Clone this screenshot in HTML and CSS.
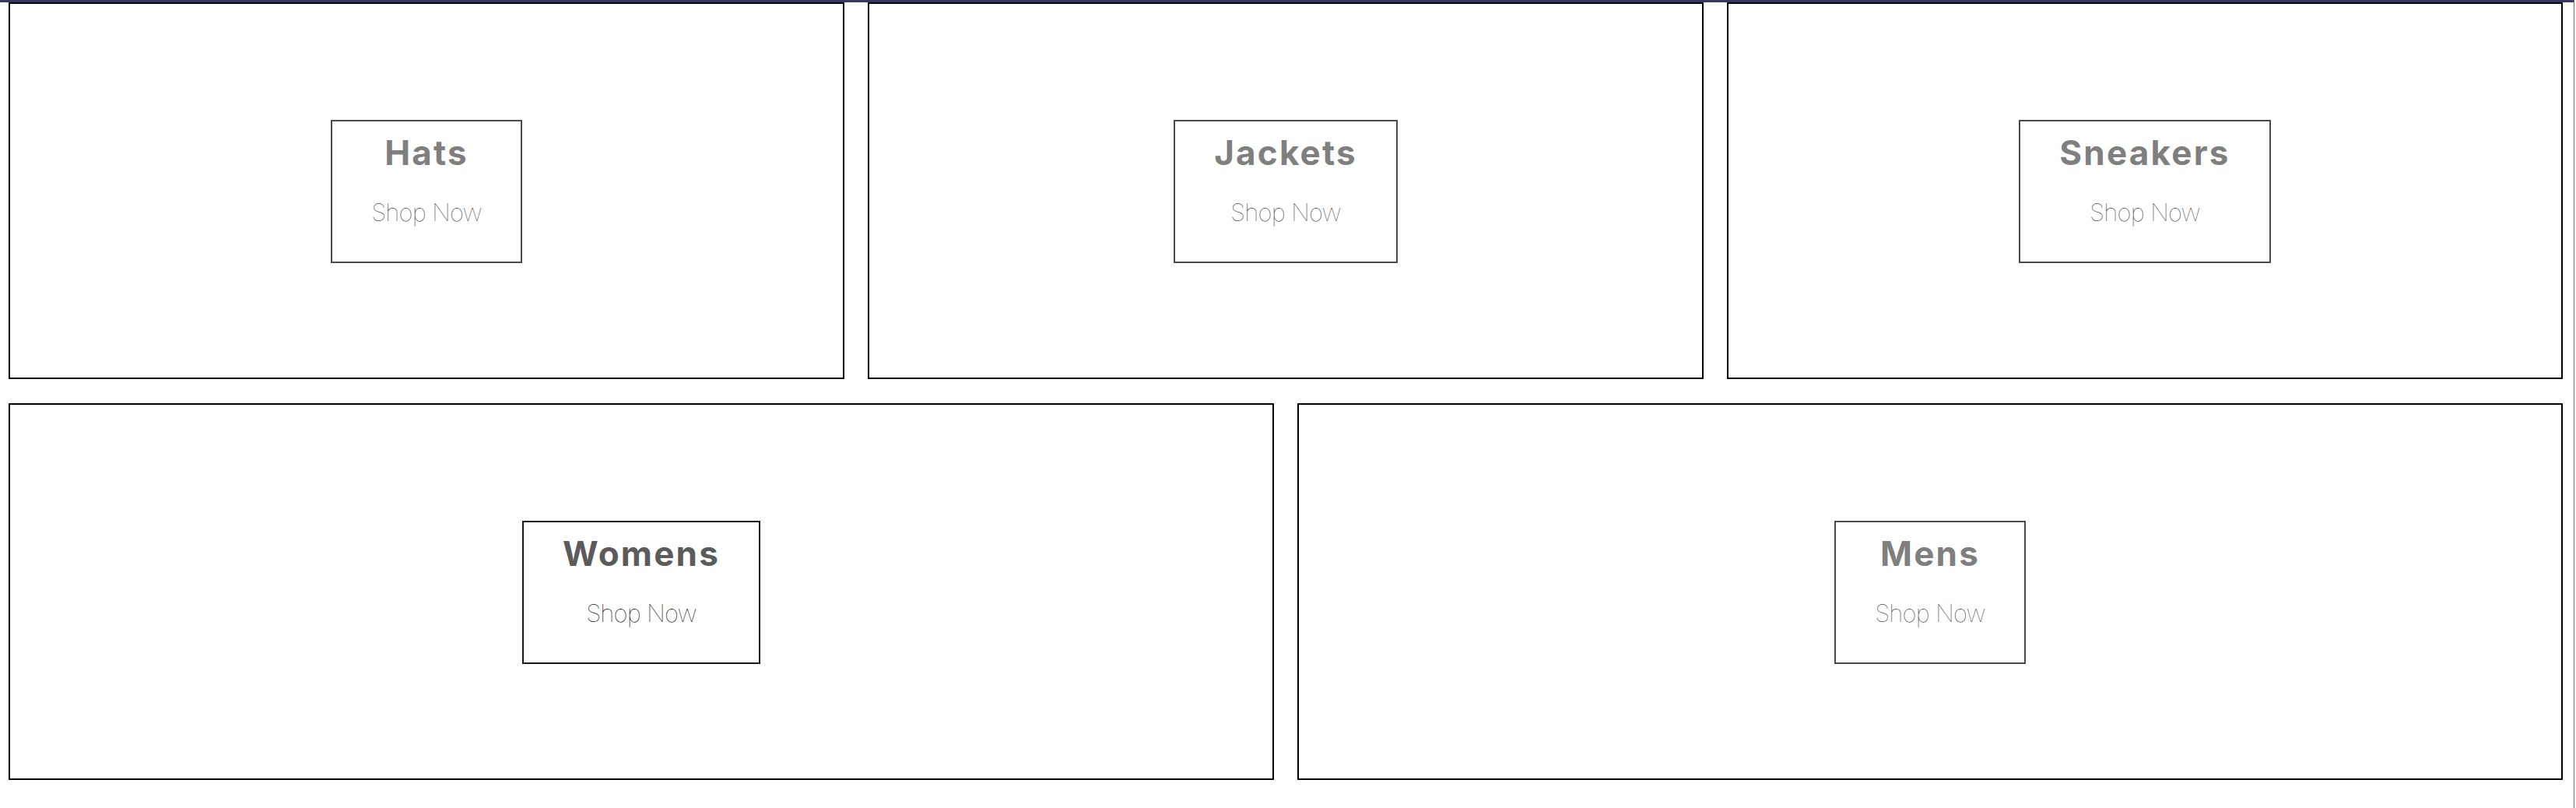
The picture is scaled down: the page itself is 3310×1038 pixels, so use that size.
FILE: index.html
```
<!DOCTYPE html>
<html lang="en">
<head>
    <meta charset="UTF-8">
    <meta name="viewport" content="width=device-width, initial-scale=1.0">
    <title>Shop Directory</title>
    <link rel="stylesheet" href="styles.css">
</head>
<body>
<div class="page">
    <div class="top-bar"></div>

    <!-- Directory menu -->
    <div class="directory-menu">
        <div class="menu-item">
            <div class="content">
                <h1 class="title">Hats</h1>
                <span class="subtitle">Shop Now</span>
            </div>
        </div>
        <div class="menu-item">
            <div class="content">
                <h1 class="title">Jackets</h1>
                <span class="subtitle">Shop Now</span>
            </div>
        </div>
        <div class="menu-item">
            <div class="content">
                <h1 class="title">Sneakers</h1>
                <span class="subtitle">Shop Now</span>
            </div>
        </div>
        <div class="menu-item hovered">
            <div class="content">
                <h1 class="title">Womens</h1>
                <span class="subtitle">Shop Now</span>
            </div>
        </div>
        <div class="menu-item">
            <div class="content">
                <h1 class="title">Mens</h1>
                <span class="subtitle">Shop Now</span>
            </div>
        </div>
    </div>
</div>
</body>
</html>
```

FILE: styles.css
```
body {
    margin: 0;
    font-family: Inter, "Liberation Sans", Arial, sans-serif;
    background-color: #fff;
}

.page {
    width: 3308px;
    min-height: 100vh;
    box-sizing: border-box;
    border-right: 1px solid #6b6b6b;
}

.top-bar {
    height: 3px;
    background-color: #3a3669;
}

.directory-menu {
    display: flex;
    flex-wrap: wrap;
    gap: 31px 30px;
    padding: 0 14px 0 11px;
}

.menu-item {
    flex: 1 1 30%;
    min-width: 30%;
    height: 484px;
    box-sizing: border-box;
    padding-top: 2px;
    border: 2px solid #000;
    display: flex;
    align-items: center;
    justify-content: center;
    overflow: hidden;
}

.menu-item .content {
    height: 184px;
    padding: 18px 50px 0;
    box-sizing: border-box;
    display: flex;
    flex-direction: column;
    align-items: center;
    border: 2px solid #000;
    background-color: #fff;
    opacity: 0.7;
}

.menu-item.hovered .content {
    opacity: 0.9;
}

.title {
    margin: 0 0 39px;
    font-size: 44px;
    line-height: 44px;
    font-weight: bold;
    letter-spacing: 2.2px;
    color: #4a4a4a;
}

.subtitle {
    font-size: 31px;
    line-height: 32px;
    font-weight: 100;
    letter-spacing: -0.8px;
    color: #000;
}
```
